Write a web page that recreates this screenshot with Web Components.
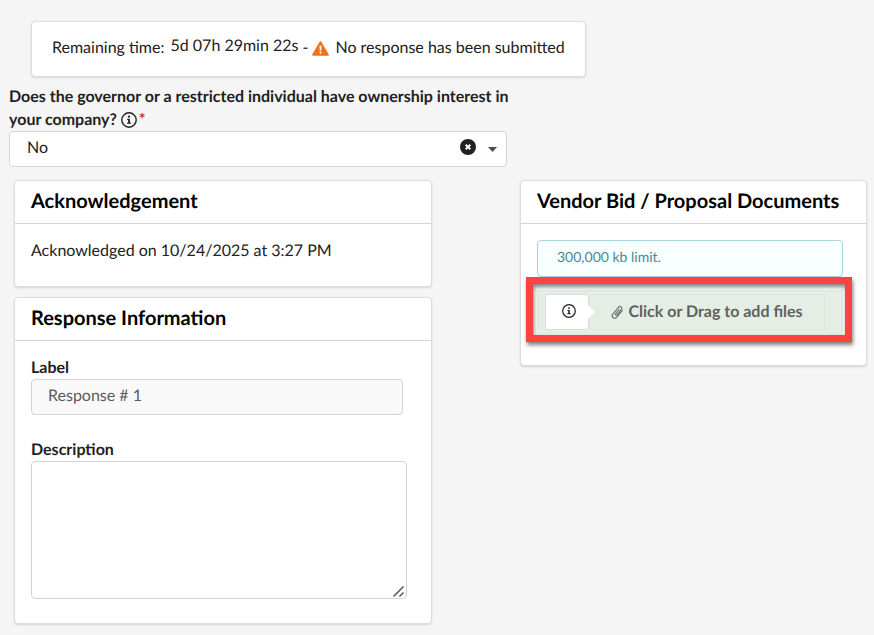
<!DOCTYPE html>
<html lang="en">
<head>
<meta charset="utf-8">
<meta name="viewport" content="width=device-width, initial-scale=1">
<title>Response</title>
<style>
    body {
        margin: 0;
        background: #f5f5f5;
        color: #212121;
        font: 16px/22px Lato, "Liberation Sans", sans-serif;
        text-rendering: geometricPrecision;
    }
    bid-status { margin: 21px 31px 8px; }
    bid-question { width: 57%; margin: 0 9px 13px; }
    .columns {
        display: grid;
        grid-template-columns: 418fr 347fr;
        gap: 88px;
        align-items: start;
        padding: 0 7px 11px 14px;
    }
    .stack {
        display: grid;
        gap: 10px;
    }
    p { margin: 0 0 8px; }
</style>
</head>
<body>
<bid-status>5d 07h 29min 22s</bid-status>
<bid-question>Does the governor or a restricted individual have ownership interest in your company?</bid-question>
<div class="columns">
    <div class="stack">
        <bid-card>
            <span slot="title">Acknowledgement</span>
            <p>Acknowledged on 10/24/2025 at 3:27 PM</p>
        </bid-card>
        <bid-card>
            <span slot="title">Response Information</span>
            <response-form></response-form>
        </bid-card>
    </div>
    <bid-card>
        <span slot="title">Vendor Bid / Proposal Documents</span>
        <file-drop>300,000 kb limit.</file-drop>
    </bid-card>
</div>

<script>
function attach(el, html) {
    let template = document.createElement('template');
    template.innerHTML = html;
    el.attachShadow({mode: 'open'}).appendChild(template.content.cloneNode(true));
}

customElements.define('info-icon',
class extends HTMLElement {
    constructor() {
        super();
        attach(this, `
        <style>
            :host { display: inline-block; width: 16px; height: 16px; }
            svg { display: block; width: 100%; height: 100%; }
        </style>
        <svg viewBox="0 0 16 16" aria-hidden="true">
            <circle cx="8" cy="8" r="7.2" fill="none" stroke="currentColor" stroke-width="1.4"/>
            <circle cx="8" cy="4.7" r="1.1" fill="currentColor"/>
            <path d="M6.2 6.8h2.7v3.7h1v1.3H6.1v-1.3h1V8.1h-.9z" fill="currentColor"/>
        </svg>
        `);
    }
})

customElements.define('bid-status',
class extends HTMLElement {
    constructor() {
        super();
        attach(this, `
        <style>
            :host { display: flex; }
            .box {
                display: flex;
                align-items: center;
                box-sizing: border-box;
                min-height: 56px;
                padding: 0 20px 2px;
                background: #fff;
                border: 1px solid #dcddde;
                border-radius: 4px;
                box-shadow: 0 1px 2px rgba(34, 36, 38, .15);
            }
            .time { margin-left: 6px; padding-bottom: 4px; }
            .dash { margin: 0 4px; }
            svg { width: 17px; height: 15px; margin-right: 6px; }
        </style>
        <div class="box">
            <span>Remaining time:</span>
            <span class="time"><slot></slot></span>
            <span class="dash">-</span>
            <svg viewBox="0 0 17 15" aria-hidden="true">
                <path d="M8.5 1.2 15.8 13.8H1.2z" fill="#f2711c" stroke="#f2711c" stroke-width="2" stroke-linejoin="round"/>
                <path d="M7.5 4.8h2l-.3 4.6H7.8z" fill="#fff"/>
                <circle cx="8.5" cy="11.6" r="1.1" fill="#fff"/>
            </svg>
            <span>No response has been submitted</span>
        </div>
        `);
    }
})

customElements.define('bid-question',
class extends HTMLElement {
    constructor() {
        super();
        attach(this, `
        <style>
            :host { display: block; }
            label {
                display: block;
                margin-right: -16px;
                font-weight: 700;
                line-height: 23px;
            }
            info-icon { vertical-align: -3px; }
            .required { color: #db2828; padding-left: 2px; }
            .field { display: grid; align-items: center; }
            .field > * { grid-area: 1 / 1; }
            select {
                appearance: none;
                box-sizing: border-box;
                width: 100%;
                height: 36px;
                padding: 0 56px 3px 17px;
                font: inherit;
                color: inherit;
                text-rendering: inherit;
                background: #fff;
                border: 1px solid #d4d4d5;
                border-radius: 4px;
            }
            .tools {
                display: flex;
                align-items: center;
                justify-self: end;
                gap: 12px;
                padding: 0 10px 4px 0;
                pointer-events: none;
            }
            button {
                width: 16px;
                height: 16px;
                padding: 0;
                border: 0;
                background: none;
                pointer-events: auto;
            }
            svg { display: block; }
            .caret { margin-top: 4px; }
        </style>
        <label for="answer"><slot></slot> <info-icon></info-icon><span class="required">*</span></label>
        <div class="field">
            <select id="answer">
                <option>No</option>
                <option>Yes</option>
            </select>
            <div class="tools">
                <button type="button" aria-label="Clear">
                    <svg width="16" height="16" viewBox="0 0 16 16">
                        <circle cx="8" cy="8" r="8" fill="#212121"/>
                        <path d="M5.7 5.7l4.6 4.6M10.3 5.7l-4.6 4.6" stroke="#fff" stroke-width="2"/>
                    </svg>
                </button>
                <svg class="caret" width="9" height="5" viewBox="0 0 9 5" aria-hidden="true">
                    <path d="M0 0h9L4.5 5z" fill="#4d4d4d"/>
                </svg>
            </div>
        </div>
        `);
        this.shadowRoot.querySelector('button').onclick = () => {
            this.shadowRoot.querySelector('select').selectedIndex = -1;
        };
    }
})

customElements.define('bid-card',
class extends HTMLElement {
    constructor() {
        super();
        attach(this, `
        <style>
            :host {
                display: block;
                min-width: 0;
                background: #fff;
                border: 1px solid #dcddde;
                border-radius: 4px;
                box-shadow: 0 1px 2px rgba(34, 36, 38, .15);
            }
            h2 {
                margin: 0;
                padding: 8px 16px 10px;
                border-bottom: 1px solid #d4d4d5;
                color: #000;
                font-size: 20px;
                line-height: 24px;
            }
            .content { padding: 16px; }
        </style>
        <h2><slot name="title"></slot></h2>
        <div class="content"><slot></slot></div>
        `);
    }
})

customElements.define('response-form',
class extends HTMLElement {
    constructor() {
        super();
        attach(this, `
        <style>
            :host { display: block; padding-bottom: 8px; }
            label { display: block; font-weight: 700; }
            input, textarea {
                display: block;
                box-sizing: border-box;
                font: inherit;
                color: inherit;
                text-rendering: inherit;
                background: #fff;
                border: 1px solid #d4d4d5;
                border-radius: 4px;
            }
            input {
                width: 97%;
                height: 36px;
                margin-bottom: 24px;
                padding: 0 16px 4px;
                color: #5c5c5c;
                background: #f9f9f9;
            }
            textarea {
                width: 98%;
                height: 138px;
                padding: 8px 16px;
                resize: none;
            }
            .area { display: grid; }
            .area > * { grid-area: 1 / 1; }
            .grip {
                place-self: end start;
                width: 98%;
                display: flex;
                justify-content: flex-end;
                box-sizing: border-box;
                padding: 0 3px 2px 0;
                pointer-events: none;
            }
        </style>
        <label for="label">Label</label>
        <input id="label" type="text" value="Response # 1" readonly>
        <label for="description">Description</label>
        <div class="area">
            <textarea id="description"></textarea>
            <div class="grip">
                <svg width="11" height="11" viewBox="0 0 11 11" aria-hidden="true">
                    <path d="M.5 10.5l10-10M6.5 10.5l4-4" stroke="#555" stroke-width="1.5"/>
                </svg>
            </div>
        </div>
        `);
    }
})

customElements.define('file-drop',
class extends HTMLElement {
    constructor() {
        super();
        attach(this, `
        <style>
            :host { display: block; padding: 0 7px 11px 0; }
            .message {
                box-sizing: border-box;
                min-height: 37px;
                padding: 5px 19px 8px;
                color: #4d8796;
                background: #f8ffff;
                border: 1px solid #a9d5de;
                border-radius: 4px;
                font-size: 14px;
            }
            .drop {
                position: relative;
                display: flex;
                margin-top: 13px;
                padding: 4px 18px 8px 8px;
                background: #e5eee5;
            }
            .highlight {
                position: absolute;
                inset: -13px -9px -4px -11px;
                border: 7px solid #ff4141;
                box-shadow: 1px 3px 4px rgba(0, 0, 0, .5), inset 1px 3px 4px rgba(0, 0, 0, .5);
                pointer-events: none;
            }
            button {
                box-sizing: border-box;
                height: 36px;
                padding: 0;
                font: inherit;
                color: inherit;
                text-rendering: inherit;
            }
            .info {
                position: relative;
                display: flex;
                align-items: center;
                justify-content: center;
                width: 44px;
                padding: 0 0 2px 4px;
                background: #fff;
                border: 1px solid #dcddde;
                border-radius: 0 4px 4px 0;
            }
            .info::after {
                content: "";
                position: absolute;
                top: 12px;
                right: -5px;
                width: 10px;
                height: 10px;
                background: #fff;
                transform: rotate(45deg);
            }
            info-icon { width: 14px; height: 14px; }
            .add {
                flex: 1;
                display: flex;
                align-items: center;
                justify-content: center;
                gap: 5px;
                background: none;
                border: 1px solid #dde3de;
                border-radius: 4px 0 0 4px;
                color: #5f625f;
                font-weight: 700;
            }
        </style>
        <div class="message"><slot></slot></div>
        <div class="drop">
            <button class="info" type="button" aria-label="Information"><info-icon></info-icon></button>
            <button class="add" type="button">
                <svg width="12" height="14" viewBox="0 0 12 14" fill="none" stroke="#777b77" stroke-width="1.3" stroke-linecap="round" aria-hidden="true">
                    <path d="M8 4.600 4.700 8.700c-.8 1 .5 2.100 1.300 1.100l4.300-5.200c1.500-2-1.200-4.200-2.900-2.200L1.800 9.200c-2 2.700 1.800 5.600 4 3L11.200 5.600"/>
                </svg>
                Click or Drag to add files
            </button>
            <div class="highlight"></div>
        </div>
        `);
    }
})
</script>
</body>
</html>
